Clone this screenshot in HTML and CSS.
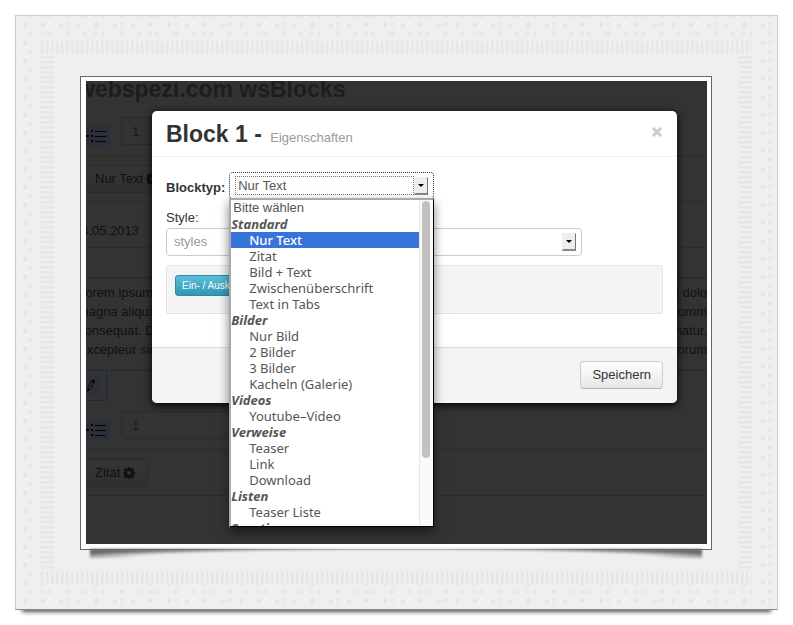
FILE: index.html
```
<!DOCTYPE html>
<html lang="de">
<head>
  <meta charset="UTF-8">
  <meta name="viewport" content="width=device-width, initial-scale=1.0">
  <title>webspezi.com wsBlocks</title>
  <link rel="stylesheet" href="styles.css">
</head>
<body>
  <svg class="sprite" width="0" height="0" aria-hidden="true">
    <symbol id="icon-list" viewBox="0 0 20 12">
      <path d="M0 5h3v2H0zM5 0h2v2H5zM5 5h2v2H5zM5 10h2v2H5zM9 1h11v1H9zM9 6h11v1H9zM9 11h11v1H9z"/>
    </symbol>
    <symbol id="icon-cog" viewBox="0 0 14 14">
      <path fill-rule="evenodd" d="M5.700 0h2.600l.4 1.900 1 .4L11.400 1.300l1.800 1.800-1 1.600.4 1 1.400.400v2.600l-1.400.400-.4 1 1 1.600-1.800 1.800-1.700-1-1 .4-.4 1.500H5.700l-.4-1.500-1-.4-1.700 1L.8 10.700l1-1.600-.4-1L0 7.700V6.100l1.400-.400.4-1-1-1.600 1.800-1.800 1.700 1 1-.4zM7 4.700a2.200 2.200 0 1 0 0 4.400 2.200 2.200 0 0 0 0-4.400z"/>
    </symbol>
    <symbol id="icon-pencil" viewBox="0 0 10 14">
      <path d="M1.500 12.500L2 9l4-7.500 2.500 1.500L4.500 10.500z" fill="none" stroke="currentColor"/>
      <path d="M1 13.500l.5-3.500 2.500 1.500zM5 2.500l3.500 2L9.500 2 7 .5z"/>
    </symbol>
  </svg>

  <div class="card">
    <div class="stripes">
      <div class="paper">
        <div class="frame">
          <div class="screen">

            <div class="page">
              <h1>webspezi.com wsBlocks</h1>
              <div class="toolbar">
                <a class="move" href="#" aria-label="Verschieben"><svg><use href="#icon-list"/></svg></a>
                <input type="text" value="1" aria-label="Position Block 1">
              </div>
              <div class="row">
                <button class="type" type="button">Nur Text <svg><use href="#icon-cog"/></svg></button>
              </div>
              <div class="row date">14.05.2013</div>
              <div class="content">
                <p><span>Lorem ipsum</span><span>sit amet dolo</span></p>
                <p><span>magna aliqua.</span><span>ea comm</span></p>
                <p><span>consequat. Duis</span><span>pariatur.</span></p>
                <p><span>Excepteur sint</span><span>laborum</span></p>
              </div>
              <div class="edit"><a href="#" aria-label="Bearbeiten"><svg><use href="#icon-pencil"/></svg></a></div>
              <div class="toolbar">
                <a class="move" href="#" aria-label="Verschieben"><svg><use href="#icon-list"/></svg></a>
                <input type="text" value="1" aria-label="Position Block 2">
              </div>
              <div class="row">
                <button class="type" type="button">Zitat <svg><use href="#icon-cog"/></svg></button>
              </div>
            </div>

            <div class="overlay">
              <div class="modal" role="dialog" aria-labelledby="modalTitle">
                <div class="modal-header">
                  <h2 id="modalTitle">Block 1 - <small>Eigenschaften</small></h2>
                  <button class="close" type="button" aria-label="Schließen">
                    <svg viewBox="0 0 10 10"><path d="M1 1l8 8M9 1L1 9"/></svg>
                  </button>
                </div>
                <div class="modal-body">
                  <div class="field">
                    <label for="blocktyp">Blocktyp:</label>
                    <div class="dropdown">
                      <div class="select focused">
                        <select id="blocktyp"><option>Nur Text</option></select>
                        <span class="arrow"></span>
                      </div>
                      <div class="menu">
                        <ul>
                          <li class="first">Bitte wählen</li>
                          <li class="group">Standard</li>
                          <li class="active">Nur Text</li>
                          <li>Zitat</li>
                          <li>Bild + Text</li>
                          <li>Zwischenüberschrift</li>
                          <li>Text in Tabs</li>
                          <li class="group">Bilder</li>
                          <li>Nur Bild</li>
                          <li>2 Bilder</li>
                          <li>3 Bilder</li>
                          <li>Kacheln (Galerie)</li>
                          <li class="group">Videos</li>
                          <li>Youtube–Video</li>
                          <li class="group">Verweise</li>
                          <li>Teaser</li>
                          <li>Link</li>
                          <li>Download</li>
                          <li class="group">Listen</li>
                          <li>Teaser Liste</li>
                          <li class="group">Sonstige</li>
                        </ul>
                        <div class="track"><div class="thumb"></div></div>
                      </div>
                    </div>
                  </div>
                  <label class="style-label" for="style">Style:</label>
                  <div class="select styles">
                    <select id="style"><option>styles</option></select>
                    <span class="arrow"></span>
                  </div>
                  <div class="well">
                    <button class="toggle" type="button">Ein- / Ausklappen</button>
                  </div>
                </div>
                <div class="modal-footer">
                  <button class="save" type="button">Speichern</button>
                </div>
              </div>
            </div>

          </div>
        </div>
      </div>
    </div>
  </div>
</body>
</html>
```
FILE: styles.css
```
*, *::before, *::after { box-sizing: border-box; }
body {
  margin: 0;
  padding: 15px;
  background: #fff;
  font: 13px/18px "Liberation Sans", Arial, sans-serif;
  color: #333;
}
h1, h2, p, ul { margin: 0; padding: 0; }
button, input, select { font: inherit; color: inherit; margin: 0; }
svg { display: block; fill: currentColor; }
.sprite { position: absolute; }

/* paper card */
.card {
  position: relative;
  padding: 25px;
  border: 1px solid #c9cccb;
  border-bottom-color: #8b8e8d;
  background-color: #f0efed;
  background-image:
    radial-gradient(circle, #e3e3e1 1px, transparent 3px),
    radial-gradient(circle, #e6e6e4 1px, transparent 3px),
    radial-gradient(circle, #e8e8e6 1px, transparent 3px);
  background-size: 18px 18px, 18px 18px, 27px 9px;
  background-position: 0 0, 6px 9px, 12px 4px;
}
.card::after {
  content: "";
  position: absolute;
  z-index: -1;
  left: 6px;
  right: 6px;
  bottom: 0;
  height: 10px;
  box-shadow: 0 3px 4px #555;
}
.stripes {
  padding: 13px;
  background:
    repeating-linear-gradient(90deg, #e6e6e4 0 2px, #f0efed 3px 5px) top / 100% 13px no-repeat,
    repeating-linear-gradient(90deg, #e6e6e4 0 2px, #f0efed 3px 5px) bottom / 100% 13px no-repeat,
    repeating-linear-gradient(#e6e6e4 0 2px, #f0efed 3px 5px);
}
.paper {
  padding: 22px 27px 21px 26px;
  background: #f0efed;
}
.frame {
  position: relative;
  z-index: 0;
  padding: 4px 4px 5px 5px;
  border: 1px solid #666;
  background: #fff;
}
.frame::after {
  content: "";
  position: absolute;
  z-index: -1;
  left: 9px;
  right: 9px;
  top: 100%;
  height: 9px;
  background: radial-gradient(50% 100% at 50% 100%, #f0efed 85%, #666 115%);
  filter: blur(1px);
}
.screen {
  position: relative;
  height: 463px;
  overflow: hidden;
  background: #333;
}

/* page behind the dialog */
.page { color: #111; }
.page h1 {
  margin-left: -9px;
  padding-bottom: 12px;
  font-size: 23px;
  line-height: 16px;
  color: #1d1d1d;
}
.toolbar {
  display: flex;
  gap: 10px;
  height: 47px;
  padding-top: 8px;
  border-bottom: 1px solid #2c2c2c;
}
.move {
  width: 25px;
  height: 20px;
  margin-top: 9px;
  padding-top: 4px;
  background: #2c2f35;
  border-right: 1px solid #26324a;
  border-bottom: 1px solid #26324a;
  color: #050505;
}
.move svg { width: 20px; height: 12px; }
.toolbar input {
  width: 220px;
  height: 28px;
  padding: 0 10px;
  border: 1px solid #292929;
  border-radius: 3px;
  background: #333;
  color: #1a1a1a;
}
.row {
  height: 46px;
  padding-top: 9px;
  border-bottom: 1px solid #2c2c2c;
}
.type {
  display: flex;
  align-items: center;
  gap: 3px;
  height: 28px;
  margin-left: -4px;
  padding: 0 12px;
  border: 1px solid #2c2c2c;
  border-radius: 4px;
  background: linear-gradient(#353535, #2f2f2f);
}
.type svg { width: 12px; height: 12px; }
.date { margin-left: -12px; padding-top: 20px; }
.content {
  height: 94px;
  margin-top: 29px;
  padding-top: 5px;
  border: 1px solid #182c3d;
  border-width: 1px 0;
  line-height: 19px;
}
.content p {
  display: flex;
  justify-content: space-between;
  margin-left: -8px;
}
.edit {
  width: 21px;
  height: 30px;
  margin-bottom: 2px;
  padding: 5px 5px 5px 0;
  border: 1px solid #182c3d;
  border-width: 0 1px 1px 0;
}
.edit a {
  display: block;
  height: 20px;
  padding-top: 3px;
  border-right: 1px solid #26324a;
  background: #2e3035;
  color: #050505;
}
.edit svg { width: 10px; height: 13px; }

/* dialog */
.overlay {
  position: absolute;
  inset: 0;
  padding: 30px 30px 0 66px;
}
.modal {
  border-radius: 5px;
  background: #fff;
  box-shadow: 0 2px 8px #000;
}
.modal-header {
  display: flex;
  justify-content: space-between;
  height: 46px;
  padding: 8px 15px 0 14px;
  border-bottom: 1px solid #eee;
}
.modal-header h2 { font-size: 23px; line-height: 30px; }
.modal-header small {
  margin-left: 2px;
  font-size: 13px;
  font-weight: normal;
  color: #999;
}
.close {
  width: 10px;
  height: 10px;
  margin-top: 8px;
  padding: 0;
  border: 0;
  background: none;
}
.close svg { stroke: #ccc; stroke-width: 3; }
.modal-body { padding: 15px 14px 33px; }
.field { display: flex; gap: 4px; margin-bottom: 10px; }
.field label { padding-top: 7px; font-weight: bold; }
.dropdown { position: relative; width: 205px; }
.select { position: relative; }
.select select {
  display: block;
  width: 100%;
  height: 27px;
  padding: 0 7px;
  border: 1px solid #ccc;
  border-radius: 4px;
  background: #fff;
  color: #999;
  appearance: none;
  outline: 0;
}
.arrow {
  position: absolute;
  top: 5px;
  right: 6px;
  width: 14px;
  height: 18px;
  border: 1px solid #eee;
  border-right-color: #777;
  border-bottom: 2px solid #888;
  background: #eee;
  pointer-events: none;
}
.arrow::after {
  content: "";
  position: absolute;
  top: 6px;
  left: 3px;
  border: 3px solid transparent;
  border-top-color: #000;
}
.focused select {
  border: 1px dotted #333;
  padding: 0 8px;
  color: #555;
}
/* focus ring round the value */
.focused::before {
  content: "";
  position: absolute;
  inset: 4px 20px 4px 6px;
  border: 1px dotted #777;
  pointer-events: none;
}
.styles { width: 416px; }
.styles select { height: 28px; }
.style-label { display: block; margin-bottom: 1px; }
.well {
  height: 49px;
  margin-top: 9px;
  padding: 9px 8px;
  border: 1px solid #e3e3e3;
  border-radius: 3px;
  background: #f4f4f4;
}
.toggle {
  display: block;
  height: 21px;
  padding: 0 6px;
  border: 1px solid #2a8aa8;
  border-radius: 3px;
  background: linear-gradient(#5bc0de, #2f96b4);
  color: #fff;
  font-size: 10px;
  line-height: 18px;
}
.modal-footer {
  display: flex;
  justify-content: flex-end;
  padding: 13px 14px 14px;
  border-top: 1px solid #ddd;
  border-radius: 0 0 5px 5px;
  background: #f4f4f4;
}
.save {
  height: 28px;
  padding: 0 11px;
  border: 1px solid #ccc;
  border-bottom-color: #b3b3b3;
  border-radius: 4px;
  background: linear-gradient(#fff, #e6e6e6);
}

/* open list */
.menu {
  position: absolute;
  z-index: 2;
  top: 26px;
  left: 0;
  right: 0;
  display: flex;
  height: 329px;
  border: 1px solid #000;
  border-top: 2px solid #aaa;
  border-left: 2px solid #aaa;
  background: #fff;
  box-shadow: 0 5px 10px rgba(0, 0, 0, .5);
  overflow: hidden;
}
.menu ul {
  flex: 1;
  list-style: none;
  font: 13px/16px "Noto Sans", sans-serif;
  color: #555;
}
.menu li { padding-left: 18px; white-space: nowrap; }
.menu .first { padding-left: 2px; font-family: "Liberation Sans", Arial, sans-serif; }
.menu .group { padding-left: 0; font-weight: bold; font-style: italic; }
.menu .active { background: #3873d9; color: #fff; font-weight: 500; }
.track {
  width: 14px;
  padding: 1px 2px;
  border-left: 1px solid #e7e7e7;
  background: #fafafa;
}
.thumb {
  width: 8px;
  height: 257px;
  border-radius: 4px;
  background: #c1c1c1;
}
```
